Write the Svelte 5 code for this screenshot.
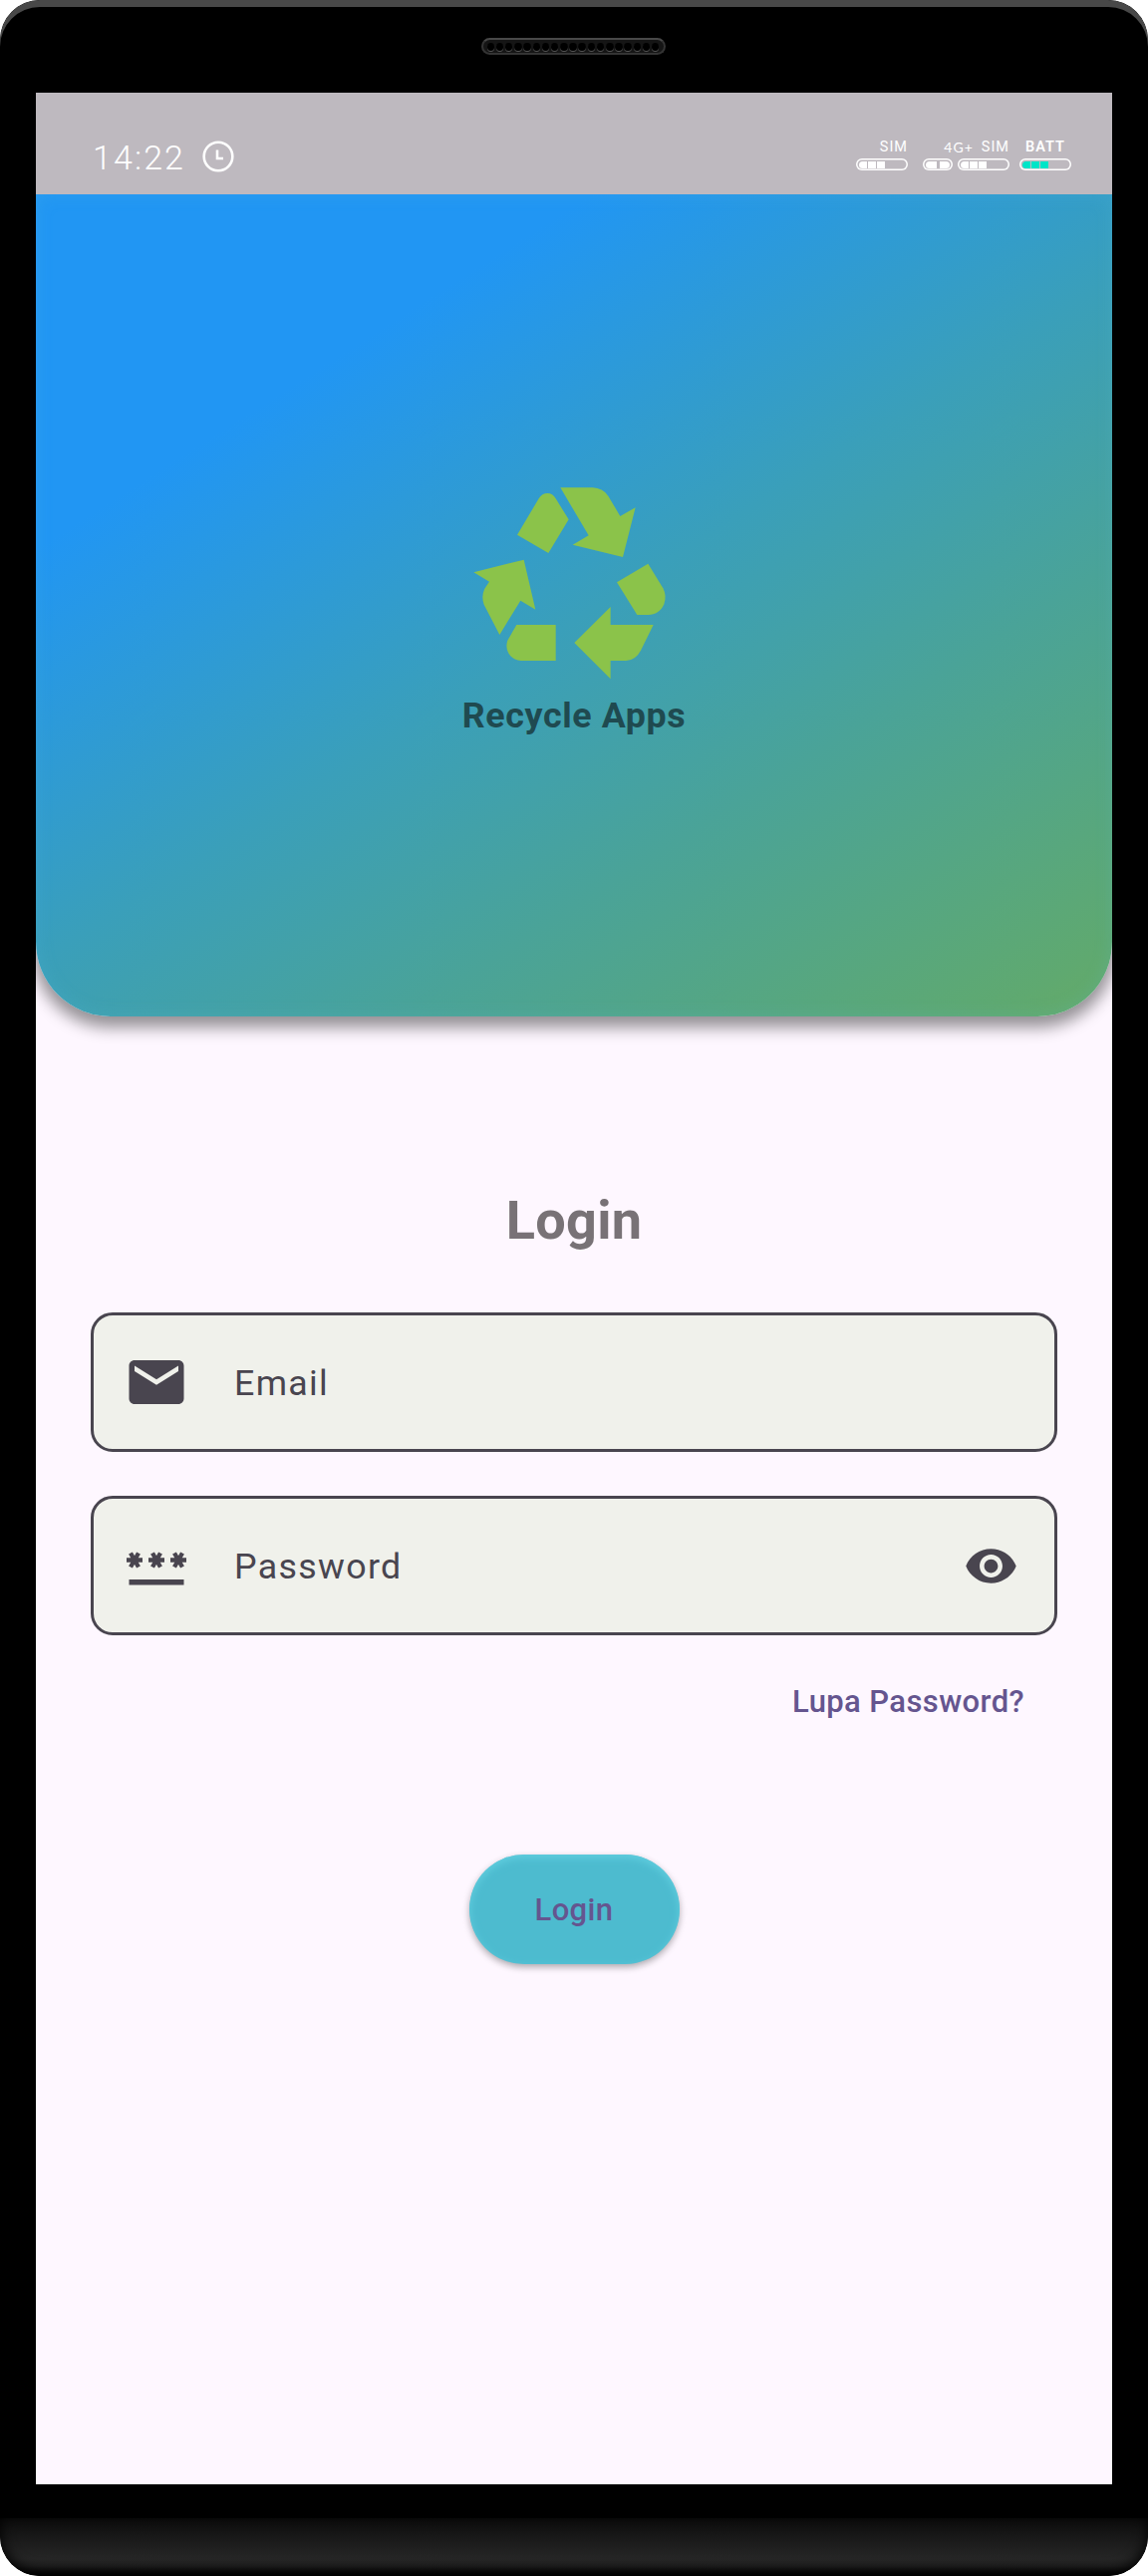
<script>
  const holes = Array.from({ length: 19 }, (_, i) => i);
  const stars = [12, 34, 56];
</script>

<div class="phone">
  <div class="top-bezel">
    <div class="speaker">
      {#each holes as hole (hole)}
        <i class="hole"></i>
      {/each}
    </div>
  </div>

  <main class="screen">
    <div class="status">
      <span class="time">14:22</span>
      <svg class="clock" viewBox="0 0 32 32">
        <circle cx="16" cy="16" r="14.300" />
        <path d="M15 9.500v8.500h6" />
      </svg>
      <div class="signals">
        <div class="signal">
          <span class="tag">SIM</span>
          <div class="pill"><i></i><i></i><i></i></div>
        </div>
        <div class="signal wide">
          <div class="tags"><span class="net">4G+</span><span class="tag">SIM</span></div>
          <div class="pills">
            <div class="pill duo"><i></i><i></i></div>
            <div class="pill"><i></i><i></i><i></i></div>
          </div>
        </div>
        <div class="signal batt">
          <span class="tag">BATT</span>
          <div class="pill charge"><i></i><i></i><i></i></div>
        </div>
      </div>
    </div>

    <header class="hero">
      <svg class="recycle" viewBox="99 78 618 594">
        <path d="M367 88H464Q494 89 511 113L547 174L593 148L555 297L404 260L452 232Z" />
        <path d="M237 230L302 121Q312 105 328 105Q344 105 353 121L392 184L331 285Z" />
        <path d="M106 343L257 305L292 455L247 428L184 531L137 440Q128 415 139 392L153 371Z" />
        <path d="M235 501H353V609H248C216 607 198 577 208 548Z" />
        <path d="M409 555L518 447V501H647L609 578Q594 607 565 609H518V664Z" />
        <path d="M537 373L631 317L676 391Q688 415 679 439C670 461 652 471 632 471H598Z" />
      </svg>
      <p class="brand">Recycle Apps</p>
    </header>

    <h1>Login</h1>

    <form>
      <div class="field">
        <svg class="icon" viewBox="0 0 24 24">
          <path d="M20 4H4c-1.100 0-2 .9-2 2v12c0 1.100.9 2 2 2h16c1.100 0 2-.9 2-2V6c0-1.100-.9-2-2-2zm0 4-8 5-8-5V6l8 5 8-5v2z" />
        </svg>
        <span class="label">Email</span>
      </div>
      <div class="field">
        <svg class="icon" viewBox="0 0 66 66">
          <path d="M5.500 47h55v5.500h-55z" />
          {#each stars as x (x)}
            <g class="star" transform="translate({x - 1} 27.5)">
              <path d="M-8 0H8M-4 -7L4 7M4 -7L-4 7" />
            </g>
          {/each}
        </svg>
        <span class="label">Password</span>
        <svg class="eye" viewBox="0 0 24 24">
          <path d="M12 4.500C7 4.500 2.730 7.610 1 12c1.730 4.390 6 7.500 11 7.500s9.270-3.110 11-7.500c-1.730-4.390-6-7.500-11-7.500zM12 17c-2.760 0-5-2.240-5-5s2.240-5 5-5 5 2.240 5 5-2.240 5-5 5zm0-8c-1.660 0-3 1.340-3 3s1.340 3 3 3 3-1.340 3-3-1.340-3-3-3z" />
        </svg>
      </div>
      <a class="forgot" href="#forgot">Lupa Password?</a>
      <button type="button">Login</button>
    </form>
  </main>

  <div class="bottom-bezel"></div>
</div>

<style>
  :global(body) {
    margin: 0;
    background: #fff;
  }
  .phone {
    width: 1152px;
    height: 2585px;
    box-sizing: border-box;
    display: flex;
    flex-direction: column;
    align-items: center;
    background: #000;
    border-radius: 40px;
    overflow: hidden;
    font-family: Roboto, sans-serif;
  }
  .top-bezel {
    width: 100%;
    height: 93px;
    flex: none;
    box-sizing: border-box;
    padding: 38px 2px 0 0;
    display: flex;
    justify-content: center;
    align-items: flex-start;
    border-radius: 40px 40px 0 0;
    box-shadow: inset 0 7px 0 #484848;
  }
  .speaker {
    width: 185px;
    height: 17px;
    box-sizing: border-box;
    border: 2px solid #343434;
    border-top-color: #484848;
    border-radius: 9px;
    background: #151515;
    display: flex;
    justify-content: center;
    align-items: center;
    gap: 1.700px;
  }
  .hole {
    width: 7.500px;
    height: 8px;
    flex: none;
    border-radius: 50%;
    background: #000;
    box-shadow: 0 1px 0 #555;
  }
  .screen {
    width: 1080px;
    height: 2400px;
    flex: none;
    background: #fef7ff;
    display: flex;
    flex-direction: column;
    overflow: hidden;
  }
  .status {
    height: 102px;
    flex: none;
    box-sizing: border-box;
    padding: 48px 41px 0 57px;
    background: #beb9bf;
    color: #fff;
    display: flex;
    align-items: flex-start;
  }
  .time {
    width: 110px;
    font: 300 34px/34px Roboto, sans-serif;
    letter-spacing: 2.100px;
  }
  .clock {
    width: 32px;
    height: 32px;
    fill: none;
    stroke: #fff;
    stroke-width: 2.600;
  }
  .signals {
    margin-left: auto;
    display: flex;
  }
  .signal {
    display: flex;
    flex-direction: column;
    align-items: flex-end;
    width: 52px;
  }
  .wide {
    width: 87px;
    margin: 0 10px 0 15px;
  }
  .tag,
  .net {
    font: 400 14.500px/14px Roboto, sans-serif;
    letter-spacing: 1px;
    height: 18px;
  }
  .net {
    font: 400 14px/14px Lato, sans-serif;
  }
  .tags {
    display: flex;
    gap: 8px;
  }
  .batt .tag {
    font-weight: 600;
    margin-right: 6px;
  }
  .pills {
    display: flex;
    gap: 5px;
  }
  .pill {
    width: 52px;
    height: 12px;
    box-sizing: border-box;
    box-shadow: inset 0 0 0 1.500px #fff;
    border-radius: 6px;
    padding: 2.500px 3px;
    display: flex;
    gap: 1px;
  }
  .pill i {
    width: 8px;
    background: #fff;
  }
  .pill i:first-child {
    border-radius: 4px 0 0 4px;
  }
  .duo {
    width: 30px;
    gap: 3px;
  }
  .duo i {
    width: 11px;
  }
  .duo i:last-child {
    border-radius: 0 4px 4px 0;
  }
  .charge i {
    background: #00e5c8;
  }
  .hero {
    height: 825px;
    flex: none;
    box-sizing: border-box;
    padding-top: 291px;
    border-radius: 0 0 75px 75px;
    background: linear-gradient(147.500deg, #2196f3 23.500%, #3a9fba 51%, #4aa398 70%, #5fa970 95%, #66aa66 100%);
    box-shadow:
      inset 0 0 18px rgba(90, 190, 225, 0.2),
      0 8px 16px 3px rgba(0, 0, 0, 0.42);
    clip-path: inset(0 0 -60px 0);
    display: flex;
    flex-direction: column;
    align-items: center;
  }
  .recycle {
    width: 206px;
    height: 198px;
    fill: #8bc34a;
  }
  .brand {
    margin: 13px 0 0;
    font-size: 35.750px;
    line-height: 42px;
    font-weight: 700;
    letter-spacing: 0.620px;
    color: #1f4a50;
  }
  h1 {
    margin: 173px 0 0;
    text-align: center;
    font-size: 54px;
    line-height: 64px;
    font-weight: 700;
    letter-spacing: 0.300px;
    color: #787276;
  }
  form {
    margin: 60px 55px 0;
    display: flex;
    flex-direction: column;
  }
  .field {
    height: 140px;
    box-sizing: border-box;
    border: 3px solid #49454f;
    border-radius: 22px;
    background: #f0f1eb;
    display: flex;
    align-items: center;
    padding: 0 36px 0 30px;
    color: #49454f;
  }
  .field + .field {
    margin-top: 44px;
  }
  .icon {
    width: 66px;
    height: 66px;
    fill: #49454f;
  }
  .star {
    stroke: #49454f;
    stroke-width: 4.400;
  }
  .label {
    margin-left: 45px;
    padding-top: 2px;
    font-size: 35.750px;
    letter-spacing: 1.320px;
  }
  .eye {
    margin-left: auto;
    width: 55px;
    height: 55px;
    fill: #49454f;
  }
  .forgot {
    align-self: flex-end;
    margin: 48px 33px 0 0;
    font-size: 31px;
    line-height: 38px;
    font-weight: 500;
    letter-spacing: 0.400px;
    color: #65558f;
    text-decoration: none;
  }
  button {
    align-self: center;
    width: 211px;
    height: 110px;
    margin-top: 134px;
    padding: 2px 0 0;
    border: 0;
    border-radius: 55px;
    background: #4dbbcf;
    color: #65558f;
    font: 500 31px/36px Roboto, sans-serif;
    letter-spacing: 0.350px;
    box-shadow:
      inset 0 3px 9px #62cfe0,
      0 3px 7px rgba(0, 0, 0, 0.32);
  }
  .bottom-bezel {
    width: 100%;
    height: 58px;
    margin-top: 34px;
    border-radius: 0 0 40px 40px;
    background: linear-gradient(#0c0c0c, #262626 70%, #202020 83%, #000);
    box-shadow: inset 0 -3px 14px #000;
  }
</style>
